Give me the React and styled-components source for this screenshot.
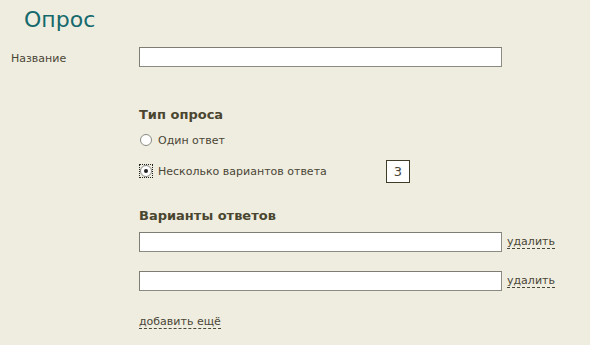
import React from "react";
import styled, { createGlobalStyle } from "styled-components";

const Global = createGlobalStyle`
  html, body { margin: 0; padding: 0; background: #efede0; }
  body { font-family: "DejaVu Sans", "Liberation Sans", sans-serif; color: #4a4636; }
`;

const Page = styled.div`
  width: 590px;
  height: 345px;
  background: #efede0;
  overflow: hidden;
`;

const Title = styled.h1`
  margin: 0;
  padding: 5px 0 0 24px;
  font-family: "DejaVu Sans", sans-serif;
  font-weight: normal;
  font-size: 22px;
  line-height: 30px;
  color: #15696c;
`;

const FieldRow = styled.div`
  display: grid;
  grid-template-columns: 139px 363px;
  align-items: center;
  margin-top: 12px;
`;

const Label = styled.label`
  padding-left: 11px;
  padding-top: 2px;
  font-size: 11px;
  color: #4a4636;
`;

const TextInput = styled.input`
  box-sizing: border-box;
  width: 363px;
  height: 20px;
  margin: 0;
  border: 1px solid #8b8b82;
  border-top-color: #7d7d74;
  border-left-color: #7d7d74;
  background: #fff;
  padding: 0 3px;
  font: inherit;
`;

const Section = styled.section`
  margin-left: 139px;
  margin-top: ${(p) => p.$top}px;
`;

const Heading = styled.h2`
  margin: 0;
  font-size: 13px;
  line-height: 16px;
  font-weight: bold;
  color: #4a4630;
`;

const RadioRow = styled.div`
  display: flex;
  align-items: center;
  height: ${(p) => p.$h}px;
  margin-top: ${(p) => p.$top}px;
`;

const RadioBox = styled.span`
  box-sizing: border-box;
  width: 14px;
  height: 14px;
  display: flex;
  align-items: center;
  justify-content: center;
  border: 1px dotted ${(p) => (p.$focus ? "#222" : "transparent")};
  margin-right: 5px;
`;

const Radio = styled.span`
  box-sizing: border-box;
  width: 12px;
  height: 12px;
  border-radius: 50%;
  border: 1px solid #8a8a84;
  background: #fff;
  display: flex;
  align-items: center;
  justify-content: center;
  &::after {
    content: "";
    width: 4px;
    height: 4px;
    border-radius: 50%;
    background: ${(p) => (p.$checked ? "#222" : "transparent")};
  }
`;

const RadioText = styled.span`
  font-size: 11px;
  color: #4a4636;
`;

const CountBox = styled.span`
  box-sizing: border-box;
  width: 24px;
  height: 23px;
  margin-left: 59px;
  border: 1px solid #3f3d28;
  background: #fff;
  display: flex;
  align-items: center;
  justify-content: center;
  font-size: 13px;
  color: #4a4636;
`;

const AnswerRow = styled.div`
  display: flex;
  align-items: center;
  gap: 5px;
  margin-top: ${(p) => p.$top}px;
`;

const DashLink = styled.a`
  font-size: 11px;
  color: #4a4636;
  text-decoration: none;
  border-bottom: 1px dashed #4a4636;
  line-height: 13px;
  cursor: pointer;
`;

const AddRow = styled.div`
  margin-top: ${(p) => p.$top}px;
`;

export default function App() {
  return (
    <Page>
      <Global />
      <Title>Опрос</Title>
      <FieldRow>
        <Label>Название</Label>
        <TextInput type="text" />
      </FieldRow>

      <Section $top={40}>
        <Heading>Тип опроса</Heading>
        <RadioRow $h={20} $top={7}>
          <RadioBox>
            <Radio />
          </RadioBox>
          <RadioText>Один ответ</RadioText>
        </RadioRow>
        <RadioRow $h={24} $top={9}>
          <RadioBox $focus>
            <Radio $checked />
          </RadioBox>
          <RadioText>Несколько вариантов ответа</RadioText>
          <CountBox>3</CountBox>
        </RadioRow>
      </Section>

      <Section $top={25}>
        <Heading>Варианты ответов</Heading>
        <AnswerRow $top={8}>
          <TextInput type="text" />
          <DashLink>удалить</DashLink>
        </AnswerRow>
        <AnswerRow $top={19}>
          <TextInput type="text" />
          <DashLink>удалить</DashLink>
        </AnswerRow>
        <AddRow $top={19}>
          <DashLink>добавить ещё</DashLink>
        </AddRow>
      </Section>
    </Page>
  );
}
